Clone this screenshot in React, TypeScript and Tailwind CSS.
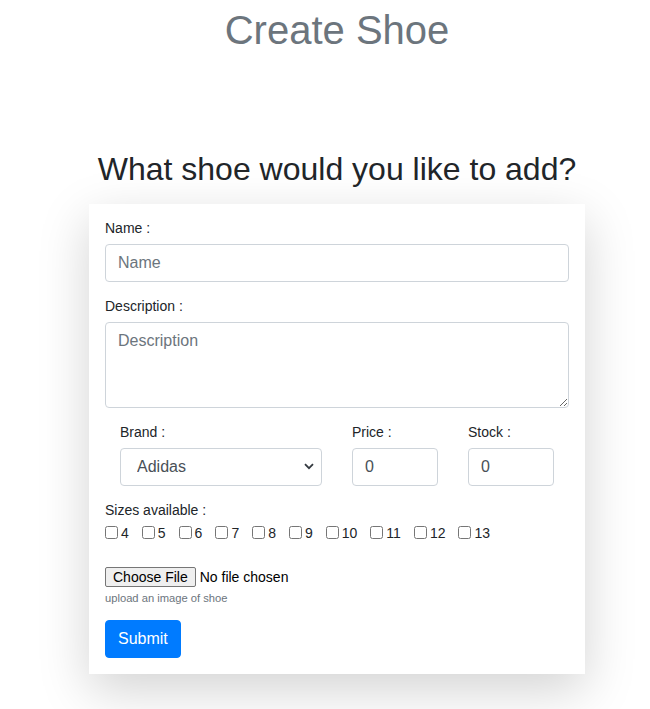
import React from "react";

const sizes = ["4", "5", "6", "7", "8", "9", "10", "11", "12", "13"];

export default function App() {
  return (
    <div className="min-h-[709px] bg-white font-['Liberation_Sans',Arial,sans-serif] text-[#212529]">
      <div className="ml-[89px] w-[496px]">
        <h1 className="pt-[6px] text-center text-[40px] leading-[48px] font-normal text-[#6c757d]">
          Create Shoe
        </h1>
        <h2 className="mt-[96px] mb-[16px] text-center text-[32px] leading-[38px] font-normal text-[#212529]">
          What shoe would you like to add?
        </h2>
        <div className="bg-white px-4 pt-[14px] pb-4 shadow-[0_1rem_3rem_rgba(0,0,0,0.175)]">
          <div className="mb-[14px]">
            <label className="mb-[5px] block text-[14px] leading-[21px]">Name :</label>
            <input
              type="text"
              placeholder="Name"
              className="block h-[38px] w-full rounded-[4px] border border-[#ced4da] px-3 text-[16px] text-[#495057] placeholder:text-[#6c757d] outline-none"
            />
          </div>
          <div className="mb-[14px]">
            <label className="mb-[5px] block text-[14px] leading-[21px]">Description :</label>
            <textarea
              placeholder="Description"
              className="block h-[86px] w-full rounded-[4px] border border-[#ced4da] px-3 py-[6px] text-[16px] leading-[24px] text-[#495057] placeholder:text-[#6c757d] outline-none"
            />
          </div>
          <div className="mb-[14px] flex pl-[15px]">
            <div className="w-[202px]">
              <label className="mb-[5px] block text-[14px] leading-[21px]">Brand :</label>
              <div className="relative">
                <select
                  defaultValue="Adidas"
                  className="block h-[38px] w-full appearance-none rounded-[4px] border border-[#ced4da] bg-white pl-[16px] pr-7 text-[16px] text-[#495057] outline-none"
                >
                  <option>Adidas</option>
                  <option>Nike</option>
                  <option>Puma</option>
                </select>
                <svg
                  className="pointer-events-none absolute right-[8px] top-[15px]"
                  width="10"
                  height="7"
                  viewBox="0 0 10 7"
                >
                  <path d="M1 1.2 L5 5.2 L9 1.2" fill="none" stroke="#343a40" strokeWidth="1.8" />
                </svg>
              </div>
            </div>
            <div className="ml-[30px] w-[86px]">
              <label className="mb-[5px] block text-[14px] leading-[21px]">Price :</label>
              <input
                type="text"
                defaultValue="0"
                className="block h-[38px] w-full rounded-[4px] border border-[#ced4da] px-3 text-[16px] text-[#495057] outline-none"
              />
            </div>
            <div className="ml-[30px] w-[86px]">
              <label className="mb-[5px] block text-[14px] leading-[21px]">Stock :</label>
              <input
                type="text"
                defaultValue="0"
                className="block h-[38px] w-full rounded-[4px] border border-[#ced4da] px-3 text-[16px] text-[#495057] outline-none"
              />
            </div>
          </div>
          <div>
            <div className="text-[14px] leading-[21px]">Sizes available :</div>
            <div className="flex items-center text-[14px] leading-[21px]">
              {sizes.map((s) => (
                <label key={s} className="mr-[13px] flex items-center">
                  <input type="checkbox" className="m-0 h-[13px] w-[13px]" />
                  <span className="ml-[3px] mt-[2px]">{s}</span>
                </label>
              ))}
            </div>
          </div>
          <div className="mt-[23px] flex items-center text-[14px] leading-[20px]">
            <span className="rounded-[2px] border border-[#767676] bg-[#efefef] px-[7px] leading-[18px] text-black">
              Choose File
            </span>
            <span className="ml-[4px] text-black">No file chosen</span>
          </div>
          <div className="mt-[3px] text-[11.2px] leading-[17px] text-[#6c757d]">upload an image of shoe</div>
          <button className="mt-[13px] h-[38px] rounded-[4px] border border-[#007bff] bg-[#007bff] px-3 text-[16px] text-white">
            Submit
          </button>
        </div>
      </div>
    </div>
  );
}
